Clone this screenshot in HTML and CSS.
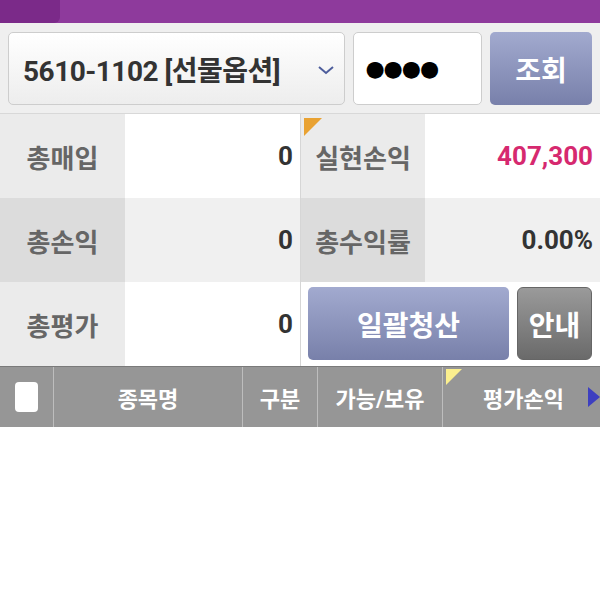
FILE: index.html
```html
<!DOCTYPE html>
<html lang="ko">
<head>
<meta charset="utf-8">
<link rel="stylesheet" href="styles.css">
</head>
<body>
<div class="topbar"><div class="back"></div></div>
<div class="search">
  <div class="select"><span class="acct">5610-1102 [선물옵션]</span>
    <svg class="chev" width="18" height="10" viewBox="0 0 18 10"><path d="M2 2 L9 8 L16 2" fill="none" stroke="#4d5d9c" stroke-width="2"/></svg>
  </div>
  <div class="pw">●●●●</div>
  <div class="btn-query">조회</div>
</div>
<div class="grid">
  <div class="lab l1">총매입</div><div class="val v1">0</div>
  <div class="lab l1 sep mark">실현손익</div><div class="val v1 red">407,300</div>
  <div class="lab l2">총손익</div><div class="val v2">0</div>
  <div class="lab l2 sep">총수익률</div><div class="val v2">0.00%</div>
  <div class="lab l1">총평가</div><div class="val v1">0</div>
  <div class="btns sep"><div class="btn-all">일괄청산</div><div class="btn-info">안내</div></div>
</div>
<div class="thead">
  <div class="th c0"><span class="chk"></span></div>
  <div class="th c1">종목명</div>
  <div class="th c2">구분</div>
  <div class="th c3">가능/보유</div>
  <div class="th c4"><span class="ytri"></span>평가손익<span class="btri"></span></div>
</div>
</body>
</html>
```
FILE: styles.css
```css
* { box-sizing: border-box; }
body {
  margin: 0;
  background: #fff;
  font-family: Roboto, "Noto Sans CJK KR", sans-serif;
  font-weight: 700;
  width: 600px;
}
.topbar {
  height: 23px;
  background: #8e3a9c;
}
.back {
  width: 60px;
  height: 23px;
  background: #7b2a89;
  border-bottom-right-radius: 6px;
}
.search {
  background: #efefef;
  display: flex;
  padding: 9px 8px 9px 8px;
  gap: 8px;
  height: 91px;
  border-bottom: 1px solid #d8d8d8;
}
.select {
  width: 338px;
  height: 73px;
  border: 1px solid #cdcdcd;
  border-radius: 5px;
  background: linear-gradient(#ffffff, #ededed);
  display: flex;
  align-items: center;
  padding-left: 14px;
  padding-right: 9px;
  justify-content: space-between;
}
.acct {
  font-size: 28px;
  color: #333;
  letter-spacing: -0.5px;
}
.chev { margin-top: 2px; }
.pw {
  width: 129px;
  height: 73px;
  border: 1px solid #cdcdcd;
  border-radius: 5px;
  background: #fff;
  display: flex;
  align-items: center;
  padding-left: 11px;
  font-size: 22px;
  color: #000;
  letter-spacing: -1px;
  font-family: "DejaVu Sans", sans-serif;
}
.btn-query {
  width: 102px;
  height: 73px;
  border-radius: 5px;
  background: linear-gradient(#a2aacf, #7880aa);
  color: #fff;
  font-size: 28px;
  display: flex;
  align-items: center;
  justify-content: center;
}
.grid {
  display: grid;
  grid-template-columns: 125px 175px 125px 175px;
  grid-auto-rows: 84px;
}
.grid > div { display: flex; align-items: center; }
.lab {
  justify-content: center;
  font-size: 26px;
  color: #666;
}
.l1 { background: #ebebeb; }
.l2 { background: #dcdcdc; }
.val {
  justify-content: flex-end;
  padding-right: 7px;
  font-size: 26px;
  color: #333;
}
.v1 { background: #fff; }
.v2 { background: #f0f0f0; }
.red { color: #d6296f; }
.sep { border-left: 1px solid #d6d6d6; }
.mark { position: relative; }
.mark::before {
  content: "";
  position: absolute;
  left: 3px;
  top: 4px;
  border-top: 18px solid #e9a232;
  border-right: 18px solid transparent;
}
.btns {
  background: #fff;
  padding: 5px 8px 6px 7px;
  gap: 8px;
  grid-column: span 2;
}
.btn-all {
  width: 201px;
  height: 73px;
  border-radius: 5px;
  background: linear-gradient(#a2aacf, #7880aa);
  color: #fff;
  font-size: 28px;
  display: flex;
  align-items: center;
  justify-content: center;
}
.btn-info {
  width: 75px;
  height: 73px;
  border-radius: 6px;
  background: linear-gradient(#9a9a9a, #6a6a6a);
  border: 1px solid #666;
  color: #fff;
  font-size: 28px;
  display: flex;
  align-items: center;
  justify-content: center;
}
.thead {
  display: flex;
  height: 61px;
  background: #969696;
  border-top: 1px solid #7a7a7a;
}
.th {
  display: flex;
  align-items: center;
  justify-content: center;
  color: #fff;
  font-size: 22px;
  border-left: 1px solid #bdbdbd;
}
.c0 { width: 53px; border-left: none; }
.c1 { width: 189px; }
.c2 { width: 75px; }
.c3 { width: 125px; }
.c4 { width: 158px; position: relative; justify-content: flex-start; padding-left: 40px; }
.chk {
  width: 23px;
  height: 30px;
  background: #fff;
  border-radius: 4px;
}
.ytri {
  position: absolute;
  left: 3px;
  top: 2px;
  border-top: 16px solid #fbef8e;
  border-right: 16px solid transparent;
}
.btri {
  position: absolute;
  right: 0;
  top: 20px;
  border-left: 12px solid #3d3fc0;
  border-top: 10px solid transparent;
  border-bottom: 10px solid transparent;
}
```
